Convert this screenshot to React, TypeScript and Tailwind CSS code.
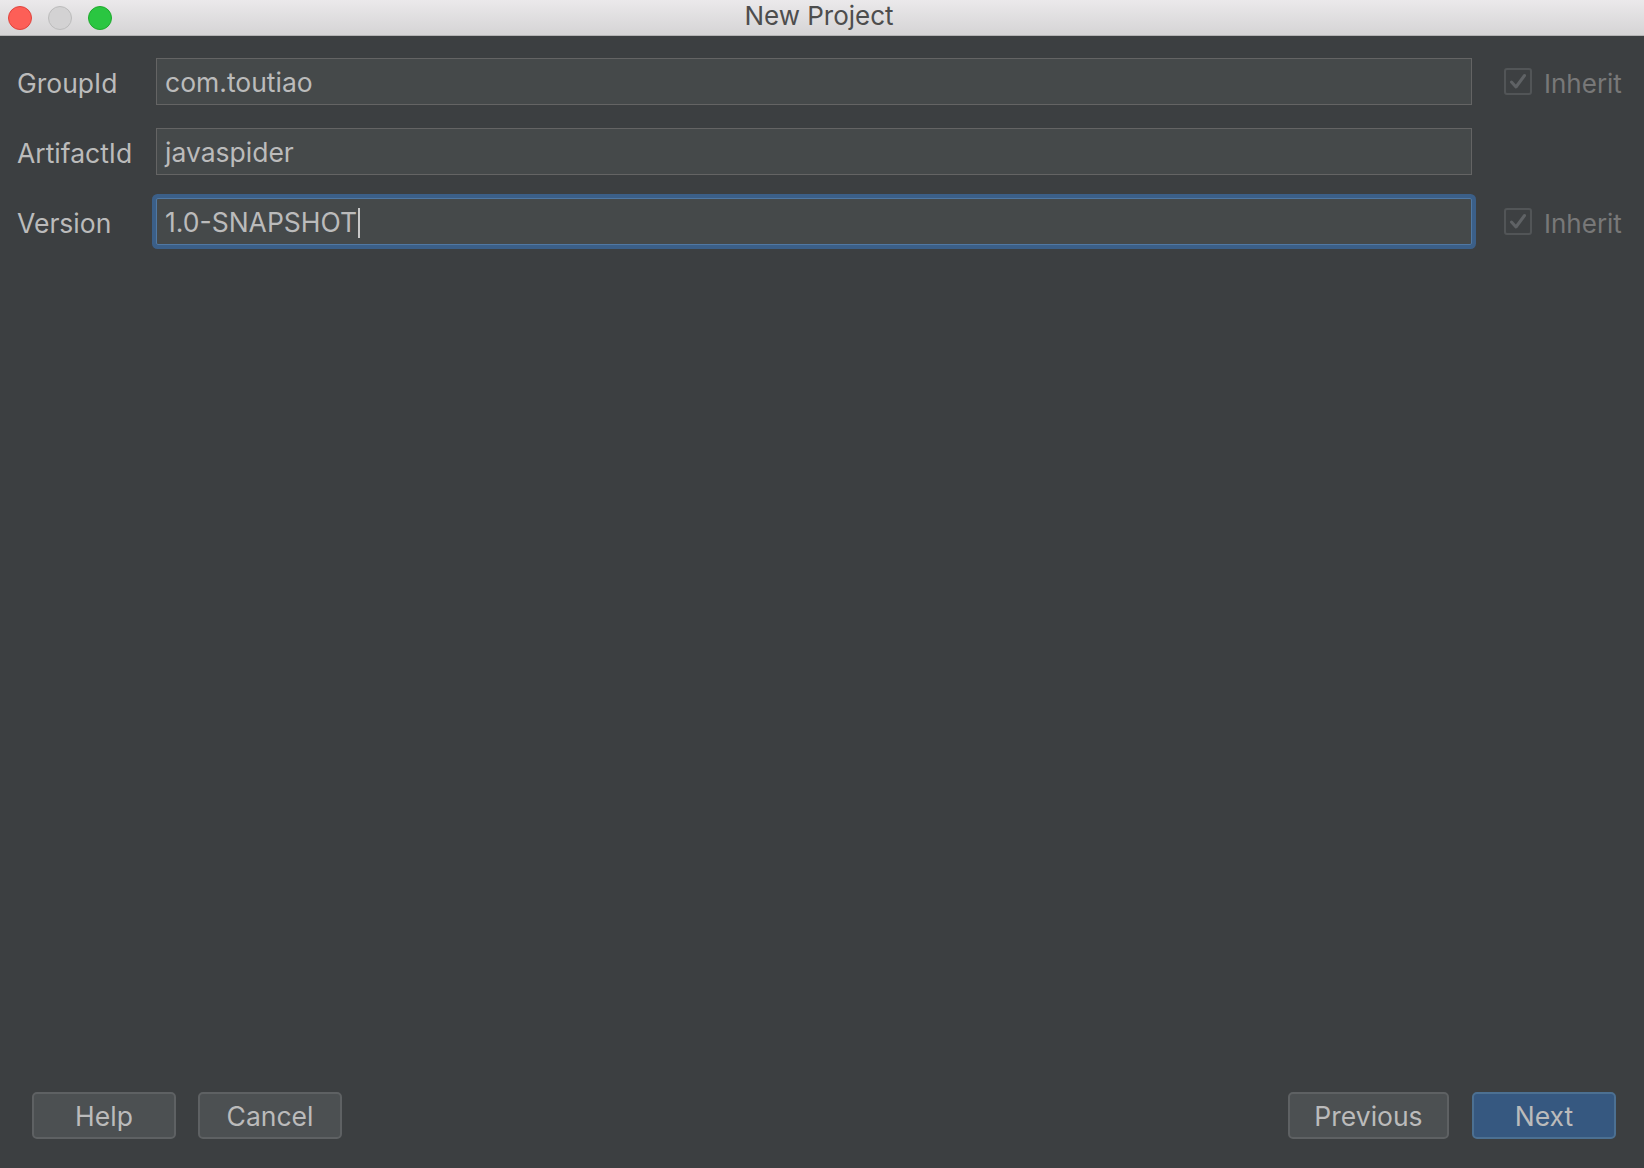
import React from "react";

const font = { fontFamily: "Inter, 'Liberation Sans', sans-serif" };

function Check() {
  return (
    <div className="w-[28px] h-[27px] rounded-[3px] border-2 border-[#525557] bg-[#3d4042] flex items-center justify-center">
      <svg width="18" height="17" viewBox="0 0 18 17" fill="none">
        <path d="M2.5 9 L7 14 L15.5 2.5" stroke="#5f6265" strokeWidth="3" strokeLinecap="round" strokeLinejoin="round" />
      </svg>
    </div>
  );
}

function Row({ label, value, inherit, focused }: { label: string; value: string; inherit?: boolean; focused?: boolean }) {
  return (
    <div className="flex items-center h-[47px]">
      <div className="w-[139px] shrink-0 pt-[4px] text-[26.5px] text-[#bbbbbb]">{label}</div>
      <div
        className={
          focused
            ? "flex-1 h-[47px] flex items-center pl-[8px] pt-[3px] bg-[#45494a] border border-[#5078a3] rounded-[2px] shadow-[0_0_0_4px_#3b5f88] text-[26.5px] text-[#bbbbbb]"
            : "flex-1 h-[47px] flex items-center pl-[8px] pt-[3px] bg-[#45494a] border border-[#646464] text-[26.5px] text-[#bbbbbb]"
        }
      >
        {value}
        {focused && <span className="inline-block w-[2px] h-[30px] bg-[#c8c8c8] ml-[1px]" />}
      </div>
      <div className="w-[172px] shrink-0 pl-[32px] flex items-center gap-[12px]">
        {inherit && (
          <>
            <Check />
            <span className="pt-[3px] text-[26px] text-[#787878]">Inherit</span>
          </>
        )}
      </div>
    </div>
  );
}

function Btn({ children, primary, w }: { children: React.ReactNode; primary?: boolean; w: string }) {
  return (
    <button
      className={
        (primary
          ? "bg-[#365880] border-[#4c7092] "
          : "bg-[#4c5052] border-[#5e6163] ") +
        w +
        " h-[47px] pt-[3px] rounded-[5px] border-2 text-[26.5px] text-[#bbbbbb] flex items-center justify-center"
      }
    >
      {children}
    </button>
  );
}

export default function App() {
  return (
    <div className="w-[1644px] h-[1168px] flex flex-col bg-[#3c3f41] overflow-hidden" style={font}>
      <div className="h-[36px] shrink-0 relative flex items-center bg-gradient-to-b from-[#ebe9eb] to-[#d5d4d5] border-b border-[#b4b4b4]">
        <div className="flex items-center gap-[16px] pl-[8px]">
          <div className="w-[24px] h-[24px] rounded-full bg-[#fd5f57] border border-[#e0443e]" />
          <div className="w-[24px] h-[24px] rounded-full bg-[#d3d2d3] border border-[#bcbcbc]" />
          <div className="w-[24px] h-[24px] rounded-full bg-[#2ac641] border border-[#1faa2d]" />
        </div>
        <div className="absolute inset-0 flex items-center justify-center pb-[5px] pr-[6px] text-[26px] text-[#4d4d4d]">
          New Project
        </div>
      </div>

      <div className="flex-1 flex flex-col gap-[23px] pt-[22px] pl-[17px]">
        <Row label="GroupId" value="com.toutiao" inherit />
        <Row label="ArtifactId" value="javaspider" />
        <Row label="Version" value="1.0-SNAPSHOT" inherit focused />
      </div>

      <div className="flex items-center justify-between px-[28px] pb-[29px] pl-[32px]">
        <div className="flex gap-[22px]">
          <Btn w="w-[144px]">Help</Btn>
          <Btn w="w-[144px]">Cancel</Btn>
        </div>
        <div className="flex gap-[23px]">
          <Btn w="w-[161px]">Previous</Btn>
          <Btn w="w-[144px]" primary>Next</Btn>
        </div>
      </div>
    </div>
  );
}
